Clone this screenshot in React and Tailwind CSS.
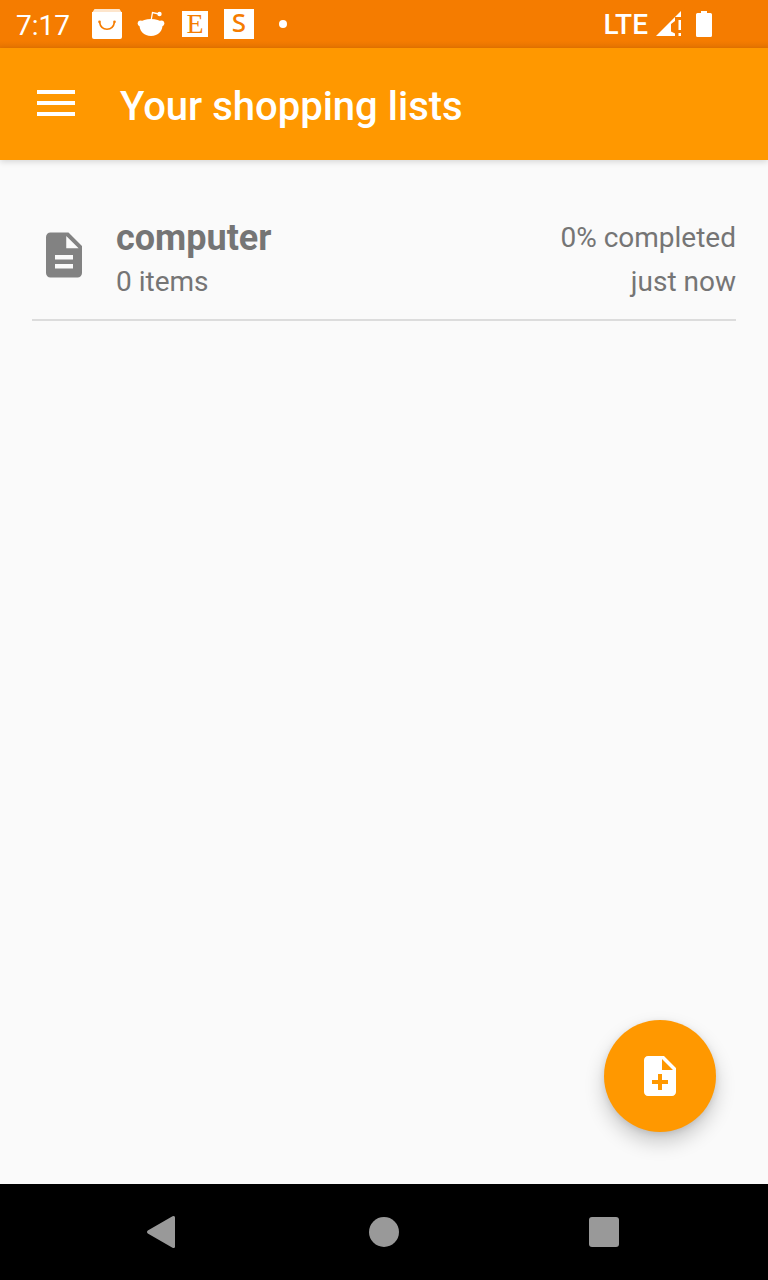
import React from "react";

const DOC_BODY =
  "M14 2H6c-1.1 0-1.99.9-1.99 2L4 20c0 1.1.89 2 1.99 2H18c1.1 0 2-.9 2-2V8l-6-6z";

function BagIcon() {
  return (
    <svg viewBox="0 0 30 30" className="size-[30px]" aria-hidden="true">
      <path d="M2.5 0h25L30 4H0z" fill="#fff" fillOpacity=".8" />
      <path d="M0 3h30v25a2 2 0 0 1-2 2H2a2 2 0 0 1-2-2z" fill="#fff" />
      <path d="M7.5 13c.8 4.600 3.800 7.200 7.500 7.200s6.700-2.600 7.500-7.200" fill="none" stroke="#f57c00" strokeWidth="1.600" />
      <circle cx="7.500" cy="12.800" r="1.300" fill="#f57c00" />
      <circle cx="22.500" cy="12.800" r="1.300" fill="#f57c00" />
    </svg>
  );
}

function RedditIcon() {
  return (
    <svg viewBox="0 0 30 30" className="size-[30px]" aria-hidden="true">
      <g fill="#fff">
        <path d="M3.500 14C6 11 10 10 15 10s9 1 11.500 4c.8 8-4.500 13-11.500 13S2.700 22 3.500 14z" />
        <circle cx="4.600" cy="14.300" r="2.900" />
        <circle cx="25.400" cy="14.300" r="2.900" />
        <circle cx="23.500" cy="5" r="2.200" />
      </g>
      <path d="M15.200 11l1.300-7.500L23 5" fill="none" stroke="#fff" strokeWidth="1.300" />
    </svg>
  );
}

function SignalIcon() {
  return (
    <svg viewBox="0 0 26 26" className="size-[26px]" aria-hidden="true">
      <path d="M25 0v6h-6v4l-4 3v7.500l4 2V25H0z" fill="#fff" />
      <path d="M22.500 9h2.500v10h-2.500zM22.500 22h2.500v3h-2.500z" fill="#fff" />
    </svg>
  );
}

function BatteryIcon() {
  return (
    <svg viewBox="0 0 16 26" className="h-[26px] w-4" aria-hidden="true">
      <path d="M5 0h6v2h3.500A1.500 1.500 0 0 1 16 3.500v21a1.500 1.500 0 0 1-1.500 1.500h-13A1.500 1.500 0 0 1 0 24.500v-21A1.500 1.500 0 0 1 1.500 2H5z" fill="#fff" />
    </svg>
  );
}

function StatusBar() {
  return (
    <div className="flex h-12 items-center bg-linear-to-b from-[#f57c00] from-85% to-[#e67400] pr-14 pl-4 text-[28px] text-white">
      <time className="w-[76px] pt-1">7:17</time>
      <div className="flex flex-1 items-center gap-3.5">
        <BagIcon />
        <RedditIcon />
        <span className="flex size-[30px] items-center justify-center">
          <span className="flex size-[26px] items-center justify-center bg-white font-['Liberation_Serif',serif] text-[28px] leading-none text-[#f57c00]">
            E
          </span>
        </span>
        <span className="flex size-[30px] items-center justify-center bg-white pb-1 font-['Noto_Sans',sans-serif] text-[26px] leading-none font-medium text-[#f57c00]">
          S
        </span>
        <span className="flex size-[30px] items-center justify-center">
          <span className="size-2 rounded-full bg-white" />
        </span>
      </div>
      <span className="pt-0.5 pr-2 font-medium">LTE</span>
      <span className="pr-3.5">
        <SignalIcon />
      </span>
      <BatteryIcon />
    </div>
  );
}

function AppBar() {
  return (
    <header className="flex h-28 items-center bg-[#ff9800] pl-8 text-white shadow-[0_2px_6px_rgba(0,0,0,0.14)]">
      <button type="button" aria-label="Open menu" className="flex size-12 items-center justify-center pb-0.5">
        <svg viewBox="0 0 38 26" className="h-[26px] w-[38px]" fill="currentColor" aria-hidden="true">
          <path d="M0 0h38v4H0zM0 11h38v4H0zM0 22h38v4H0z" />
        </svg>
      </button>
      <h1 className="pt-1.5 pl-10 text-[40px] leading-12 font-medium">Your shopping lists</h1>
    </header>
  );
}

function ListRow({ name, items, completed, updated }) {
  return (
    <li>
      <a href="#list" className="flex items-center border-b-2 border-[#dcdcdc] pb-[15px] text-[28px] leading-11 text-[#757575]">
        <span className="flex w-16 justify-center pb-2.5">
          <svg viewBox="0 0 24 24" className="size-[54px]" fill="#828282" aria-hidden="true">
            <path d={DOC_BODY + "m2 16H8v-2h8v2zm0-4H8v-2h8v2zm-3-5V3.5L18.5 9H13z"} />
          </svg>
        </span>
        <span className="flex flex-1 flex-col pl-5">
          <span className="text-[36px] leading-11 font-bold">{name}</span>
          <span>{items}</span>
        </span>
        <span className="flex flex-col text-right">
          <span>{completed}</span>
          <span>{updated}</span>
        </span>
      </a>
    </li>
  );
}

function NavBar() {
  const button = "flex h-24 w-[220px] items-center justify-center";
  return (
    <nav aria-label="System" className="flex justify-center bg-black text-[#999]">
      <button type="button" aria-label="Back" className={button}>
        <svg viewBox="0 0 34 34" className="size-[34px]" fill="currentColor" aria-hidden="true">
          <path d="M.8 15.600L25.500 1.300Q28 .2 28 2.600v28.800q0 2.400-2.500 1.300L.8 18.400q-1.600-1.400 0-2.800z" />
        </svg>
      </button>
      <button type="button" aria-label="Home" className={button}>
        <span className="size-[30px] rounded-full bg-[#999]" />
      </button>
      <button type="button" aria-label="Recent apps" className={button}>
        <span className="size-[30px] rounded-[3px] bg-[#999]" />
      </button>
    </nav>
  );
}

export default function App() {
  return (
    <div className="flex min-h-screen flex-col bg-[#fafafa] font-[Roboto,sans-serif]">
      <StatusBar />
      <AppBar />
      <main className="flex flex-1 flex-col justify-between">
        <ul className="px-8 pt-14">
          <ListRow name="computer" items="0 items" completed="0% completed" updated="just now" />
        </ul>
        <div className="flex justify-end pr-[52px] pb-[52px]">
          <button
            type="button"
            aria-label="Add list"
            className="flex size-28 items-center justify-center rounded-full bg-[#ff9800] text-white shadow-[0_10px_20px_rgba(0,0,0,0.2),0_2px_6px_rgba(0,0,0,0.1)]"
          >
            <svg viewBox="0 0 24 24" className="size-12" fill="currentColor" aria-hidden="true">
              <path d={DOC_BODY + "m2 14h-3v3h-2v-3H8v-2h3v-3h2v3h3v2zm-3-7V3.5L18.5 9H13z"} />
            </svg>
          </button>
        </div>
      </main>
      <NavBar />
    </div>
  );
}
